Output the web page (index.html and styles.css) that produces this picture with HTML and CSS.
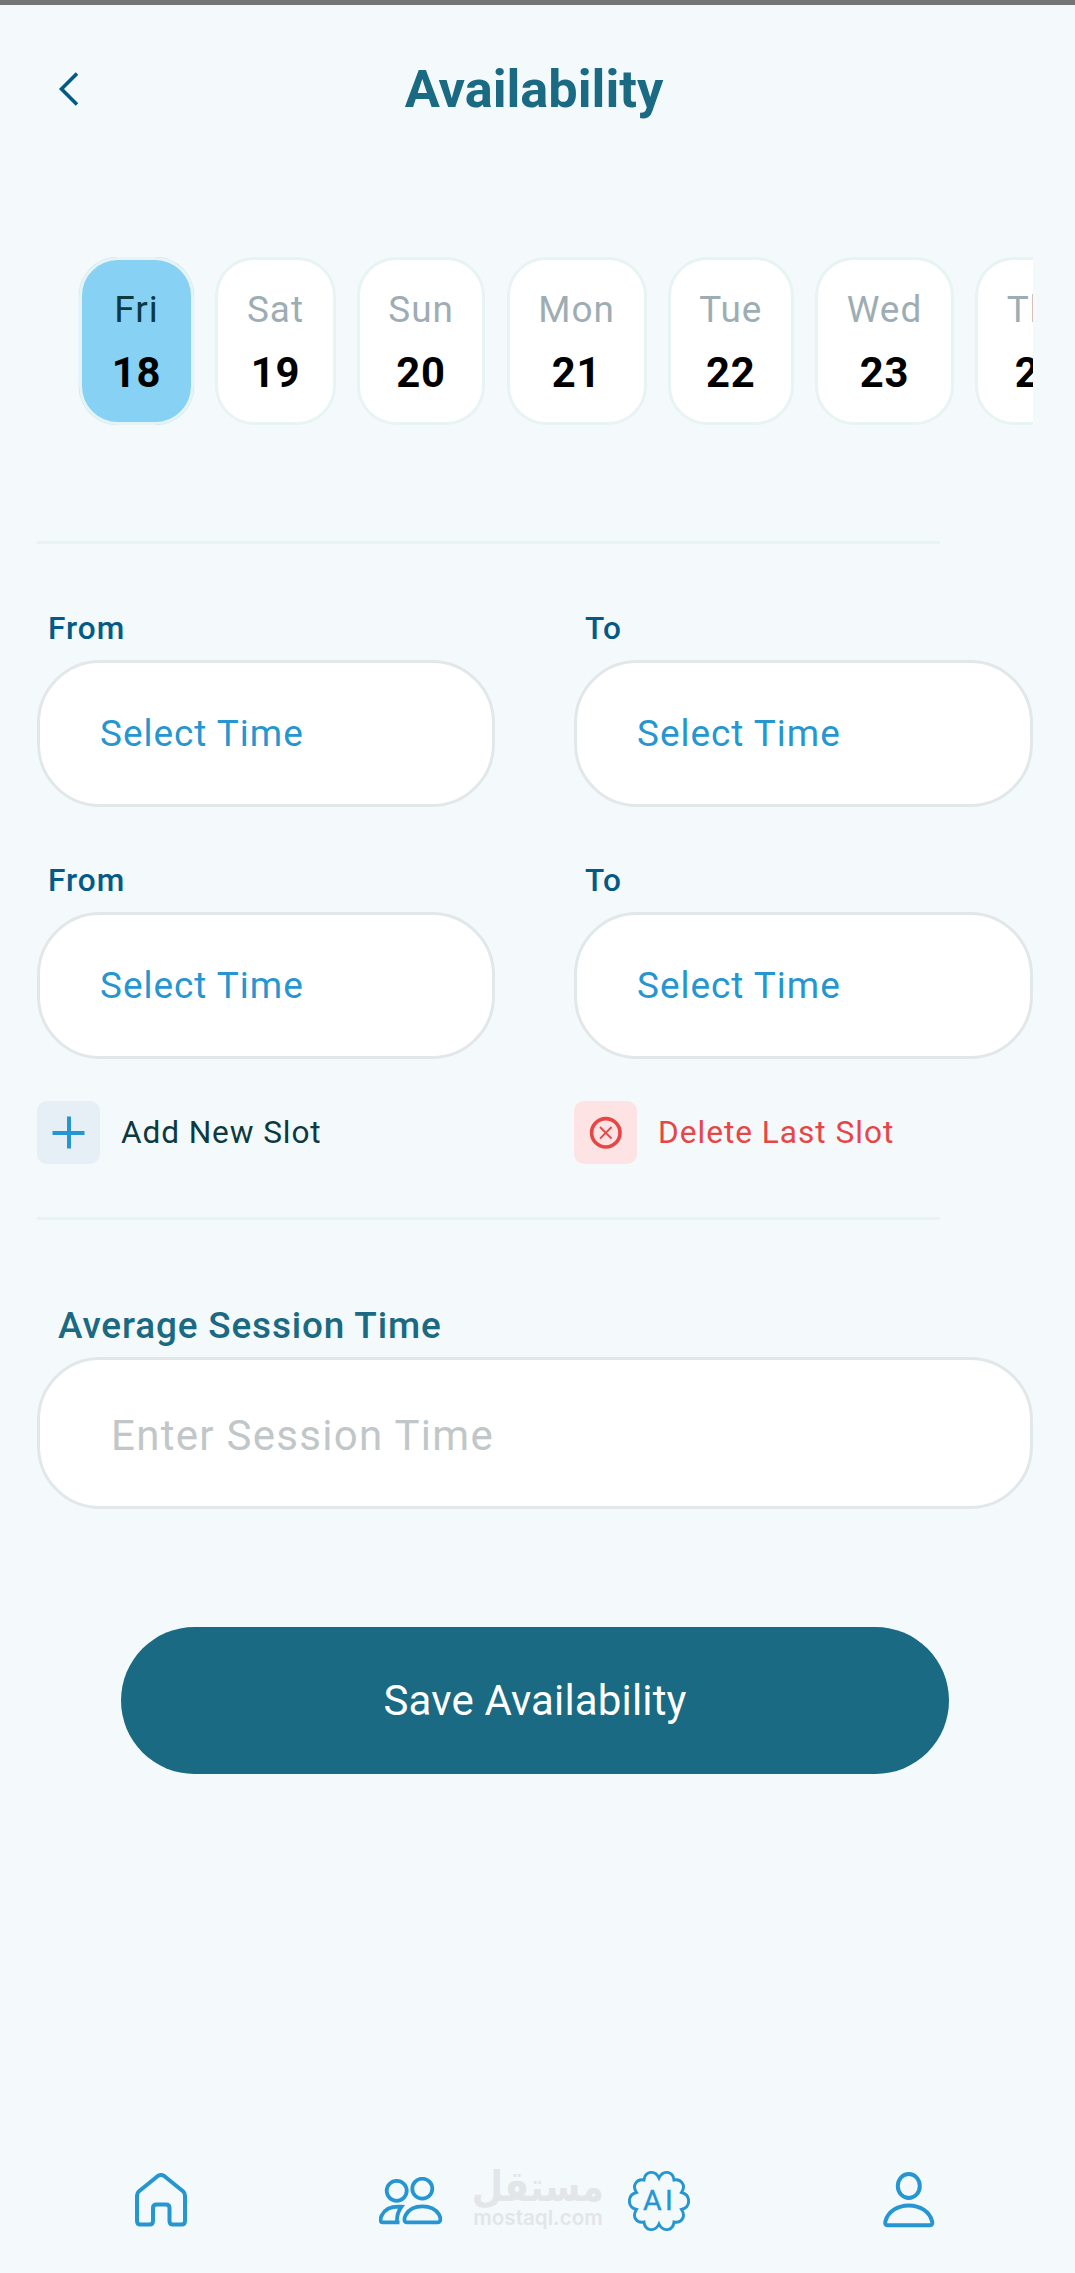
FILE: index.html
```html
<!DOCTYPE html>
<html lang="en">
<head>
<meta charset="utf-8">
<title>Availability</title>
<link rel="stylesheet" href="styles.css">
</head>
<body>
<div class="screen">
  <header class="header">
    <svg class="back" width="20" height="34" viewBox="0 0 20 34"><path d="M19 1.500L3.500 17L19 32.500" fill="none" stroke="#045a86" stroke-width="3.600"/></svg>
    <h1 class="title">Availability</h1>
  </header>

  <div class="days">
    <div class="day day-fri active"><span class="name">Fri</span><span class="num">18</span></div>
    <div class="day day-sat"><span class="name">Sat</span><span class="num">19</span></div>
    <div class="day day-sun"><span class="name">Sun</span><span class="num">20</span></div>
    <div class="day day-mon"><span class="name">Mon</span><span class="num">21</span></div>
    <div class="day day-tue"><span class="name">Tue</span><span class="num">22</span></div>
    <div class="day day-wed"><span class="name">Wed</span><span class="num">23</span></div>
    <div class="day day-thu"><span class="name">Thu</span><span class="num">24</span></div>
  </div>

  <div class="divider"></div>

  <div class="slots">
    <div class="slot"><span class="label">From</span><div class="field">Select Time</div></div>
    <div class="slot"><span class="label">To</span><div class="field">Select Time</div></div>
    <div class="slot"><span class="label">From</span><div class="field">Select Time</div></div>
    <div class="slot"><span class="label">To</span><div class="field">Select Time</div></div>
  </div>

  <div class="actions">
    <div class="action">
      <span class="badge"><svg width="33" height="33" viewBox="0 0 33 33"><path d="M17 0.5V32.5M0.5 17H32.5" fill="none" stroke="#2596d1" stroke-width="4"/></svg></span>
      <span>Add New Slot</span>
    </div>
    <div class="action delete">
      <span class="badge"><svg width="33" height="33" viewBox="0 0 33 33"><g fill="none" stroke="#e84545"><circle cx="16.800" cy="16.800" r="14.200" stroke-width="3.600"/><path d="M11 11L22.600 22.600M22.600 11L11 22.600" stroke-width="1.900"/></g></svg></span>
      <span>Delete Last Slot</span>
    </div>
  </div>

  <div class="divider"></div>

  <div class="session">
    <span class="session-label">Average Session Time</span>
    <div class="session-field">Enter Session Time</div>
  </div>

  <div class="save">Save Availability</div>

  <nav class="nav">
    <svg class="home" width="52" height="54" viewBox="0 0 52 54"><path d="M2 22.500Q2 20 4 18.200L22.500 3.200Q26 0.800 29.500 3.200L48 18.200Q50 20 50 22.500V48Q50 51.500 46.500 51.500H38Q34.500 51.500 34.500 48V35Q34.500 31.500 31 31.500H21.500Q18 31.500 18 35V48Q18 51.500 14.500 51.500H5.500Q2 51.500 2 48Z" fill="none" stroke="#2596d1" stroke-width="4" stroke-linejoin="round"/></svg>
    <svg class="people" width="64" height="48" viewBox="0 0 64 48"><g fill="none" stroke="#2596d1" stroke-width="3.800"><circle cx="17.700" cy="13.800" r="10"/><circle cx="43.300" cy="11.700" r="10"/><path d="M28 45.300C24.500 45.300 25 41 27 37.500C30 32.500 36 29.400 43.300 29.400S57 32.500 60 37.500C62.500 42 61.500 45.300 58.500 45.300Z"/><path d="M20.500 45.300H3.500C1 45.300 1 41.500 3 38C6 32 13 29 22.500 29.700C19 34.500 17.600 39.500 18 45.300"/></g></svg>
    <div class="watermark">
      <span class="wm-arabic" lang="ar">مستقل</span>
      <span class="wm-latin">mostaql.com</span>
    </div>
    <svg class="ai" width="62" height="62" viewBox="0 0 62 62"><path d="M31 8C27 -0.500 17 1 16 10C9 8.500 3.500 15.500 8.500 22.500C-1 25 -1 37 8.500 39.500C3.500 47 9 53.500 16 52C17 61 27 62.500 31 54C35 62.500 45 61 46 52C53 53.500 58.500 47 53.500 39.500C63 37 63 25 53.500 22.500C58.500 15.500 53 8.500 46 10C45 1 35 -0.500 31 8Z" fill="none" stroke="#2596d1" stroke-width="2.900"/><text class="ai-text" x="15" y="40">A</text><text class="ai-text" x="37" y="40">I</text></svg>
    <svg class="person" width="52" height="56" viewBox="0 0 52 56"><g fill="none" stroke="#2596d1" stroke-width="4"><ellipse cx="25.800" cy="14" rx="11" ry="12"/><path d="M4.500 53.200H47Q50 53.200 49 49C46.500 39.500 37 33.400 25.800 33.400S5 39.500 2.500 49Q1.500 53.200 4.500 53.200Z"/></g></svg>
  </nav>
</div>
</body>
</html>
```
FILE: styles.css
```css
* { box-sizing: border-box; }
body {
  margin: 0;
  background: #f4f9fc;
  font-family: Roboto, "Liberation Sans", sans-serif;
}
.screen {
  width: 1075px;
  height: 2273px;
  border-top: 5px solid #737674;
  padding-left: 37px;
  overflow: hidden;
  display: flex;
  flex-direction: column;
}
.header {
  height: 168px;
  padding-left: 21px;
  display: flex;
  align-items: center;
  flex: none;
}
.back { flex: none; }
.title {
  width: 912px;
  margin: 0;
  text-align: center;
  font-size: 52.300px;
  line-height: 60px;
  font-weight: 700;
  color: #196a82;
}
.days {
  width: 996px;
  height: 168px;
  flex: none;
  margin-top: 84px;
  padding-left: 42px;
  display: flex;
  gap: 21.200px;
  overflow: hidden;
}
.day {
  flex: none;
  background: #fff;
  border: 3px solid #e8f3f3;
  border-radius: 39px;
  padding-top: 28px;
  display: flex;
  flex-direction: column;
  align-items: center;
  white-space: nowrap;
}
.active {
  background: #86d1f4;
  box-shadow: 0 0 1px #86d1f4;
}
.day-fri { width: 115px; }
.day-sat { width: 120.500px; }
.day-sun { width: 128.500px; }
.day-mon { width: 140px; }
.day-tue { width: 126px; }
.day-wed { width: 139px; }
.day-thu { width: 129px; }
.name {
  font-size: 36.900px;
  line-height: 44px;
  letter-spacing: 1px;
  color: #9eadb4;
}
.active .name { color: #0d3940; }
.num {
  margin-top: 17px;
  font-size: 41.800px;
  line-height: 48px;
  letter-spacing: 0.800px;
  font-weight: 700;
  color: #000;
}
.divider {
  flex: none;
  width: 903px;
  height: 3px;
  margin-top: 116px;
  background: #e8f3f3;
}
.slots {
  width: 996px;
  margin-top: 64px;
  display: grid;
  grid-template-columns: 458px 459px;
  column-gap: 79px;
  row-gap: 53px;
}
.slot { display: flex; flex-direction: column; gap: 12px; }
.label {
  padding-left: 11px;
  font-size: 31.600px;
  line-height: 41px;
  height: 40px;
  letter-spacing: 1px;
  font-weight: 500;
  color: #045a86;
}
.field {
  height: 147px;
  border: 3px solid #e2e7e9;
  border-radius: 63px;
  background: #fff;
  padding-left: 60px;
  font-size: 36.900px;
  line-height: 141px;
  letter-spacing: 1px;
  color: #2596d1;
}
.actions {
  width: 996px;
  margin-top: 42px;
  display: grid;
  grid-template-columns: 458px 459px;
  column-gap: 79px;
}
.action {
  display: flex;
  align-items: center;
  gap: 21px;
  height: 63px;
  font-size: 31.600px;
  line-height: 40px;
  letter-spacing: 0.900px;
  color: #0d3940;
}
.badge {
  width: 63px;
  height: 63px;
  border-radius: 10px;
  background: #e6eef6;
  display: flex;
  align-items: center;
  justify-content: center;
}
.delete { color: #e84545; letter-spacing: 1px; }
.delete .badge { background: #fee3e5; }
.actions + .divider { margin-top: 53px; }
.session { margin-top: 80px; width: 996px; display: flex; flex-direction: column; }
.session-label {
  padding-left: 21px;
  height: 57px;
  font-size: 36.900px;
  line-height: 52px;
  letter-spacing: 0.850px;
  font-weight: 500;
  color: #196a82;
}
.session-field {
  height: 152px;
  border: 3px solid #e2e7e9;
  border-radius: 63px;
  background: #fff;
  padding-left: 71px;
  font-size: 42px;
  line-height: 152px;
  letter-spacing: 1.300px;
  color: #c1c7c9;
}
.save {
  flex: none;
  width: 828px;
  height: 147px;
  margin: 118px 0 0 84px;
  border-radius: 74px;
  background: #196a82;
  color: #fff;
  text-align: center;
  font-size: 42px;
  line-height: 147px;
  letter-spacing: 0.150px;
}
.nav {
  flex: none;
  margin-top: 393px;
  padding-left: 98px;
  display: flex;
  align-items: flex-start;
}
.home { margin-top: 6px; }
.people { margin: 10px 0 0 192px; }
.watermark {
  width: 130px;
  height: 64px;
  margin-left: 30px;
  display: flex;
  flex-direction: column;
  align-items: center;
  color: #e2e6e8;
}
.wm-arabic {
  height: 39px;
  font-family: "DejaVu Sans", sans-serif;
  font-weight: 700;
  font-size: 42px;
  line-height: 39px;
  white-space: nowrap;
  transform: scaleX(0.86);
}
.wm-latin {
  font-family: Inter, sans-serif;
  font-weight: 600;
  font-size: 20.600px;
  line-height: 24px;
  white-space: nowrap;
}
.ai { margin: 3px 0 0 25px; }
.ai-text { font-family: Roboto, sans-serif; font-size: 28.500px; fill: #2596d1; stroke: #2596d1; stroke-width: 0.400px; }
.person { margin: 5px 0 0 193px; }
```
